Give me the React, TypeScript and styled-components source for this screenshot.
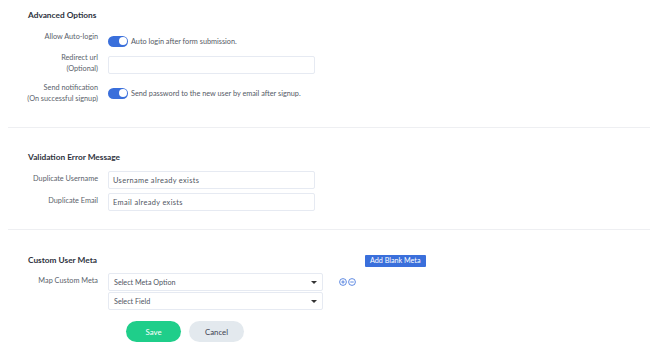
import React from "react";
import styled, { createGlobalStyle } from "styled-components";

const Global = createGlobalStyle`
  html, body { margin: 0; padding: 0; background: #ffffff; }
  body { font-family: Lato, "Open Sans", sans-serif; color: #3c4150; }
  * { box-sizing: border-box; }
`;

const Page = styled.div`
  width: 650px;
  height: 351px;
  overflow: hidden;
  background: #fff;
  padding-left: 8px;
`;

const Section = styled.section<{ $pt: number; $pb: number; $divider?: boolean }>`
  padding: ${(p) => p.$pt}px 0 ${(p) => p.$pb}px 20px;
  border-bottom: ${(p) => (p.$divider ? "1px solid #eeeff2" : "none")};
`;

const TitleRow = styled.div`
  display: flex;
  align-items: center;
  height: 14px;
`;

const Title = styled.h3`
  margin: 0;
  font-size: 8.3px;
  font-weight: 700;
  color: #2e3340;
  width: 337px;
`;

const Rows = styled.div<{ $mt: number; $gap: number }>`
  display: flex;
  flex-direction: column;
  gap: ${(p) => p.$gap}px;
  margin-top: ${(p) => p.$mt}px;
`;

const Row = styled.div<{ $mt?: number }>`
  display: grid;
  grid-template-columns: 70px auto;
  column-gap: 10px;
  align-items: start;
  margin-top: ${(p) => p.$mt ?? 0}px;
`;

const Label = styled.label<{ $pt: number }>`
  display: flex;
  flex-direction: column;
  align-items: flex-end;
  text-align: right;
  font-size: 7.3px;
  line-height: 10.5px;
  color: #5a5f6b;
  padding-top: ${(p) => p.$pt}px;
  white-space: nowrap;
`;

const Control = styled.div<{ $mt: number }>`
  margin-top: ${(p) => p.$mt}px;
`;

const ToggleLine = styled.div`
  display: flex;
  align-items: center;
  gap: 3px;
  height: 12px;
  font-size: 7.3px;
  color: #555a66;
`;

const Toggle = styled.span`
  position: relative;
  display: inline-block;
  width: 20px;
  height: 11px;
  border-radius: 6px;
  background: #3a6fdb;
  &::after {
    content: "";
    position: absolute;
    right: 1.5px;
    top: 1.5px;
    width: 8px;
    height: 8px;
    border-radius: 50%;
    background: #fff;
  }
`;

const Input = styled.div<{ $w: number }>`
  width: ${(p) => p.$w}px;
  height: 18px;
  border: 1px solid #e6eaf2;
  border-radius: 2px;
  background: #fff;
  font-size: 7.4px;
  letter-spacing: 0.35px;
  color: #50555f;
  display: flex;
  align-items: center;
  padding-left: 4px;
`;

const SelectBox = styled.div`
  width: 215px;
  height: 18px;
  border: 1px solid #e6eaf2;
  border-radius: 2px;
  background: #fff;
  font-size: 7.2px;
  color: #50555f;
  display: flex;
  align-items: center;
  justify-content: space-between;
  padding: 0 5px;
`;

const Caret = styled.span`
  width: 0;
  height: 0;
  border-left: 3px solid transparent;
  border-right: 3px solid transparent;
  border-top: 3.5px solid #333;
`;

const Stack = styled.div`
  display: flex;
  flex-direction: column;
  gap: 1px;
`;

const MetaControls = styled.div`
  display: flex;
  align-items: flex-start;
  gap: 16px;
`;

const Icons = styled.div`
  display: flex;
  gap: 1px;
  margin-top: 5px;
`;

const BlueButton = styled.button`
  height: 12px;
  padding: 0 5px;
  border: none;
  border-radius: 1px;
  background: #3a6fdb;
  color: #fff;
  font-family: Lato, sans-serif;
  font-size: 7.2px;
  line-height: 12px;
  margin-top: 1px;
`;

const Actions = styled.div`
  display: flex;
  gap: 8px;
  margin: 11px 0 0 98px;
`;

const Pill = styled.button<{ $primary?: boolean }>`
  width: 55px;
  height: 21px;
  border: none;
  border-radius: 11px;
  font-family: Lato, sans-serif;
  font-size: 7.8px;
  background: ${(p) => (p.$primary ? "#1fce8a" : "#e3e9ee")};
  color: ${(p) => (p.$primary ? "#ffffff" : "#3c4150")};
`;

const CircleIcon = ({ minus }: { minus?: boolean }) => (
  <svg width="8" height="8" viewBox="0 0 16 16">
    <circle cx="8" cy="8" r="6.8" fill="none" stroke="#3a6fdb" strokeWidth="1.6" />
    <line x1="4.6" y1="8" x2="11.4" y2="8" stroke="#3a6fdb" strokeWidth="1.6" />
    {!minus && <line x1="8" y1="4.6" x2="8" y2="11.4" stroke="#3a6fdb" strokeWidth="1.6" />}
  </svg>
);

export default function App() {
  return (
    <Page>
      <Global />
      <Section $pt={8} $pb={23} $divider>
        <TitleRow>
          <Title>Advanced Options</Title>
        </TitleRow>
        <Rows $mt={10} $gap={6}>
          <Row>
            <Label $pt={0}>Allow Auto-login</Label>
            <Control $mt={3}>
              <ToggleLine>
                <Toggle />
                <span>Auto login after form submission.</span>
              </ToggleLine>
            </Control>
          </Row>
          <Row>
            <Label $pt={0}>
              <span>Redirect url</span>
              <span>(Optional)</span>
            </Label>
            <Control $mt={3}>
              <Input $w={207} />
            </Control>
          </Row>
          <Row $mt={3}>
            <Label $pt={0}>
              <span>Send notification</span>
              <span>(On successful signup)</span>
            </Label>
            <Control $mt={4}>
              <ToggleLine>
                <Toggle />
                <span>Send password to the new user by email after signup.</span>
              </ToggleLine>
            </Control>
          </Row>
        </Rows>
      </Section>
      <Section $pt={22} $pb={18} $divider>
        <TitleRow>
          <Title>Validation Error Message</Title>
        </TitleRow>
        <Rows $mt={7} $gap={4}>
          <Row>
            <Label $pt={3}>Duplicate Username</Label>
            <Input $w={207}>Username already exists</Input>
          </Row>
          <Row>
            <Label $pt={3}>Duplicate Email</Label>
            <Input $w={207}>Email already exists</Input>
          </Row>
        </Rows>
      </Section>
      <Section $pt={23} $pb={0}>
        <TitleRow>
          <Title>Custom User Meta</Title>
          <BlueButton>Add Blank Meta</BlueButton>
        </TitleRow>
        <Rows $mt={6} $gap={0}>
          <Row>
            <Label $pt={3}>Map Custom Meta</Label>
            <MetaControls>
              <Stack>
                <SelectBox>
                  <span>Select Meta Option</span>
                  <Caret />
                </SelectBox>
                <SelectBox>
                  <span>Select Field</span>
                  <Caret />
                </SelectBox>
              </Stack>
              <Icons>
                <CircleIcon />
                <CircleIcon minus />
              </Icons>
            </MetaControls>
          </Row>
        </Rows>
        <Actions>
          <Pill $primary>Save</Pill>
          <Pill>Cancel</Pill>
        </Actions>
      </Section>
    </Page>
  );
}
